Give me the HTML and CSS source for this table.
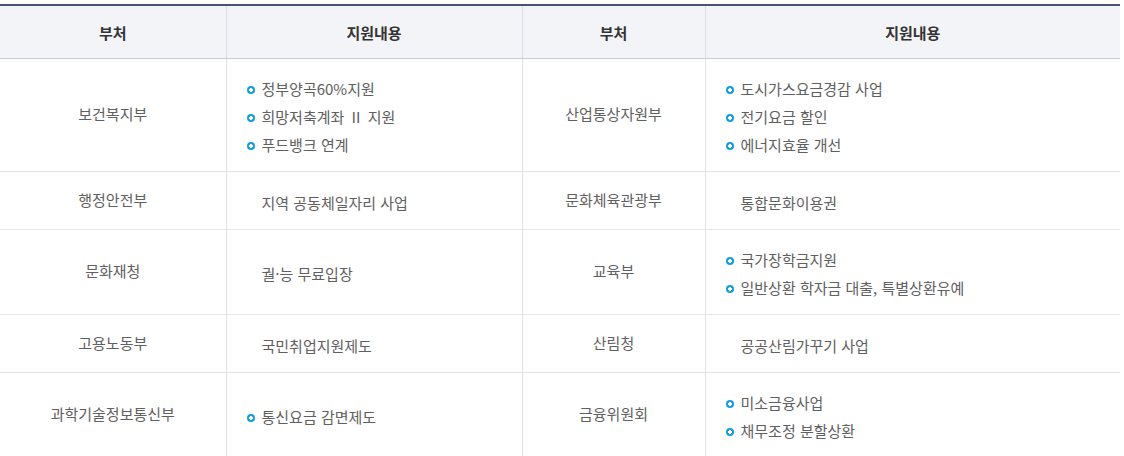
FILE: index.html
```html
<!DOCTYPE html>
<html lang="ko">
<head>
<meta charset="utf-8">
<link rel="stylesheet" href="styles.css">
</head>
<body>
<table class="tbl">
  <colgroup>
    <col class="c1"><col class="c2"><col class="c3"><col class="c4">
  </colgroup>
  <thead>
    <tr><th>부처</th><th>지원내용</th><th>부처</th><th>지원내용</th></tr>
  </thead>
  <tbody>
    <tr class="r3">
      <td class="dept">보건복지부</td>
      <td class="cont"><ul><li>정부양곡60%지원</li><li>희망저축계좌 Ⅱ 지원</li><li>푸드뱅크 연계</li></ul></td>
      <td class="dept">산업통상자원부</td>
      <td class="cont"><ul><li>도시가스요금경감 사업</li><li>전기요금 할인</li><li>에너지효율 개선</li></ul></td>
    </tr>
    <tr class="r1">
      <td class="dept">행정안전부</td>
      <td class="cont"><p>지역 공동체일자리 사업</p></td>
      <td class="dept">문화체육관광부</td>
      <td class="cont"><p>통합문화이용권</p></td>
    </tr>
    <tr class="r2">
      <td class="dept">문화재청</td>
      <td class="cont"><p>궐·능 무료입장</p></td>
      <td class="dept">교육부</td>
      <td class="cont"><ul><li>국가장학금지원</li><li>일반상환 학자금 대출, 특별상환유예</li></ul></td>
    </tr>
    <tr class="r1">
      <td class="dept">고용노동부</td>
      <td class="cont"><p>국민취업지원제도</p></td>
      <td class="dept">산림청</td>
      <td class="cont"><p>공공산림가꾸기 사업</p></td>
    </tr>
    <tr class="r2">
      <td class="dept">과학기술정보통신부</td>
      <td class="cont"><ul><li>통신요금 감면제도</li></ul></td>
      <td class="dept">금융위원회</td>
      <td class="cont"><ul><li>미소금융사업</li><li>채무조정 분할상환</li></ul></td>
    </tr>
  </tbody>
</table>
</body>
</html>
```
FILE: styles.css
```css
html, body {
  margin: 0;
  padding: 0;
  background: #fff;
}
body {
  padding-top: 4px;
  font-family: "Noto Sans CJK KR", "Noto Sans", sans-serif;
  font-size: 15px;
  color: #606060;
}
.tbl {
  width: 1120px;
  table-layout: fixed;
  border-collapse: collapse;
  border-top: 2px solid #4b5275;
}
.c1 { width: 226px; }
.c2 { width: 296px; }
.c3 { width: 183px; }
.c4 { width: 415px; }
.tbl th {
  height: 52px;
  padding: 0;
  background: #f3f4f8;
  color: #333;
  font-size: 15px;
  font-weight: bold;
  text-align: center;
  vertical-align: middle;
  border-left: 1px solid #dcdde6;
  border-bottom: 1px solid #c8c9db;
}
.tbl th:first-child { border-left: 0; }
.tbl td {
  padding: 0;
  border-left: 1px solid #e1e1e1;
  border-bottom: 1px solid #e4e4e4;
  vertical-align: middle;
  line-height: 28px;
}
.tbl td:first-child { border-left: 0; }
.r3 td { height: 108px; }
.r1 td { height: 53px; }
.r2 td { height: 80px; }
.dept {
  text-align: center;
  padding-bottom: 2px !important;
}
.cont {
  padding: 4px 0 0 20px !important;
}
.cont p {
  margin: 0;
  padding-left: 15px;
}
.cont ul {
  margin: 0;
  padding: 0;
  list-style: none;
}
.cont li::before {
  content: "";
  display: inline-block;
  width: 8px;
  height: 8px;
  border-radius: 50%;
  background: radial-gradient(circle, #fff 0, #fff 1.6px, #129fe2 2.1px);
  margin-right: 7px;
  vertical-align: 1px;
}
```
